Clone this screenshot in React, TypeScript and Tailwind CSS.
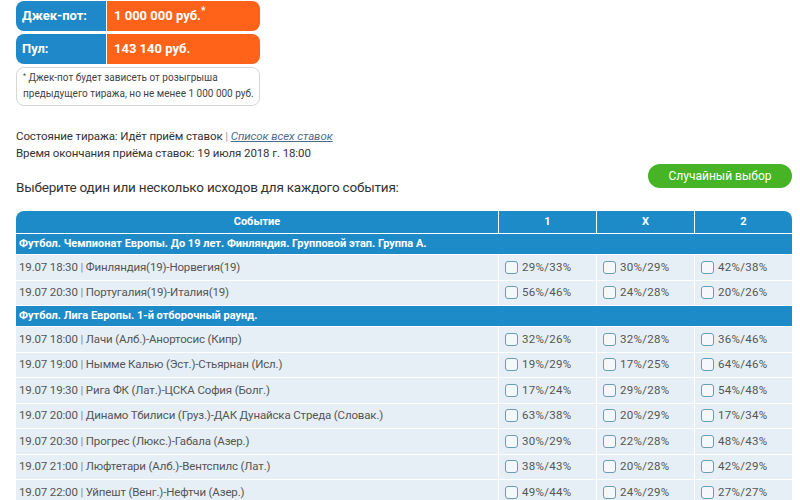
import React from "react";

type Match = { time: string; name: string; odds: [string, string, string] };
type Group = { title: string; matches: Match[] };

const groups: Group[] = [
  {
    title: "Футбол. Чемпионат Европы. До 19 лет. Финляндия. Групповой этап. Группа A.",
    matches: [
      { time: "19.07 18:30", name: "Финляндия(19)-Норвегия(19)", odds: ["29%/33%", "30%/29%", "42%/38%"] },
      { time: "19.07 20:30", name: "Португалия(19)-Италия(19)", odds: ["56%/46%", "24%/28%", "20%/26%"] },
    ],
  },
  {
    title: "Футбол. Лига Европы. 1-й отборочный раунд.",
    matches: [
      { time: "19.07 18:00", name: "Лачи (Алб.)-Анортосис (Кипр)", odds: ["32%/26%", "32%/28%", "36%/46%"] },
      { time: "19.07 19:00", name: "Нымме Калью (Эст.)-Стьярнан (Исл.)", odds: ["19%/29%", "17%/25%", "64%/46%"] },
      { time: "19.07 19:30", name: "Рига ФК (Лат.)-ЦСКА София (Болг.)", odds: ["17%/24%", "29%/28%", "54%/48%"] },
      { time: "19.07 20:00", name: "Динамо Тбилиси (Груз.)-ДАК Дунайска Стреда (Словак.)", odds: ["63%/38%", "20%/29%", "17%/34%"] },
      { time: "19.07 20:30", name: "Прогрес (Люкс.)-Габала (Азер.)", odds: ["30%/29%", "22%/28%", "48%/43%"] },
      { time: "19.07 21:00", name: "Люфтетари (Алб.)-Вентспилс (Лат.)", odds: ["38%/43%", "20%/28%", "42%/29%"] },
      { time: "19.07 22:00", name: "Уйпешт (Венг.)-Нефтчи (Азер.)", odds: ["49%/44%", "24%/29%", "27%/27%"] },
    ],
  },
];

const OddCell: React.FC<{ value: string }> = ({ value }) => (
  <td className="w-[98px] border-l border-t border-white px-[6px]">
    <label className="flex items-center gap-[4px] cursor-pointer">
      <span className="w-[13px] h-[13px] rounded-[3px] border border-[#6a9db2] bg-[#f4f8fb]" />
      <span className="text-[#555] tracking-[0.3px]">{value}</span>
    </label>
  </td>
);

export default function App() {
  return (
    <div
      className="w-[800px] h-[500px] overflow-hidden bg-white text-[#333] pl-4 pr-2 pt-px"
      style={{ fontFamily: 'Roboto, "Noto Sans", sans-serif' }}
    >
      {/* jackpot block */}
      <div className="w-[244px] flex flex-col gap-[3px]">
        <div className="flex h-[30px] rounded-[8px] overflow-hidden font-bold text-white text-[13px]">
          <div className="w-[90px] bg-[#1e88c8] flex items-center pl-[6px]">Джек-пот:</div>
          <div className="flex-1 bg-[#ff6319] border-l border-white flex items-center pl-[7px]">
            1 000 000 руб.<sup className="text-[10px] -top-[5px]">*</sup>
          </div>
        </div>
        <div className="flex h-[30px] rounded-[8px] overflow-hidden font-bold text-white text-[13px]">
          <div className="w-[90px] bg-[#1e88c8] flex items-center pl-[6px]">Пул:</div>
          <div className="flex-1 bg-[#ff6319] border-l border-white flex items-center pl-[7px]">143 140 руб.</div>
        </div>
        <div className="h-[39px] rounded-[8px] border border-[#d6d6d6] px-[6px] pt-[2px] text-[10px] leading-[16px] text-[#444] whitespace-nowrap">
          <sup className="text-[7px]">*</sup> Джек-пот будет зависеть от розыгрыша
          <br />
          предыдущего тиража, но не менее 1 000 000 руб.
        </div>
      </div>

      {/* status */}
      <div className="mt-[22px] text-[11.5px] tracking-[-0.1px] leading-[17px] text-[#333]">
        <div>
          Состояние тиража: Идёт приём ставок <span className="text-[#999]">|</span>{" "}
          <a className="italic underline text-[#4a6d8c]">Список всех ставок</a>
        </div>
        <div>Время окончания приёма ставок: 19 июля 2018 г. 18:00</div>
      </div>

      {/* choose */}
      <div className="mt-[2px] flex items-start justify-between">
        <div className="mt-[14px] text-[13.5px] tracking-[-0.2px] leading-[18px] text-[#333]">
          Выберите один или несколько исходов для каждого события:
        </div>
        <button className="w-[144px] h-[24px] rounded-full bg-[#46b425] text-white text-[12px]">
          Случайный выбор
        </button>
      </div>

      {/* table */}
      <table className="mt-[15px] w-[776px] border-separate border-spacing-0 text-[11.5px] tracking-[-0.15px]">
        <thead>
          <tr className="h-[22px] text-white text-[11px] tracking-normal">
            <th className="bg-[#1e8bc9] rounded-tl-[8px] font-bold">Событие</th>
            <th className="bg-[#1e8bc9] border-l border-white font-bold">1</th>
            <th className="bg-[#1e8bc9] border-l border-white font-bold">X</th>
            <th className="bg-[#1e8bc9] rounded-tr-[8px] border-l border-white font-bold">2</th>
          </tr>
        </thead>
        <tbody>
          {groups.map((g) => (
            <React.Fragment key={g.title}>
              <tr className="h-[21px] text-white">
                <td colSpan={4} className="bg-[#1e8bc9] px-[3px] text-[11px] tracking-normal font-bold border-t border-white">
                  {g.title}
                </td>
              </tr>
              {g.matches.map((m) => (
                <tr key={m.time + m.name} className="h-[25.5px] bg-[#e6eff5]">
                  <td className="pl-[3px] text-[#555] border-t border-white">
                    {m.time} <span className="text-[#888]">|</span> {m.name}
                  </td>
                  {m.odds.map((o, i) => (
                    <OddCell key={i} value={o} />
                  ))}
                </tr>
              ))}
            </React.Fragment>
          ))}
        </tbody>
      </table>
    </div>
  );
}
